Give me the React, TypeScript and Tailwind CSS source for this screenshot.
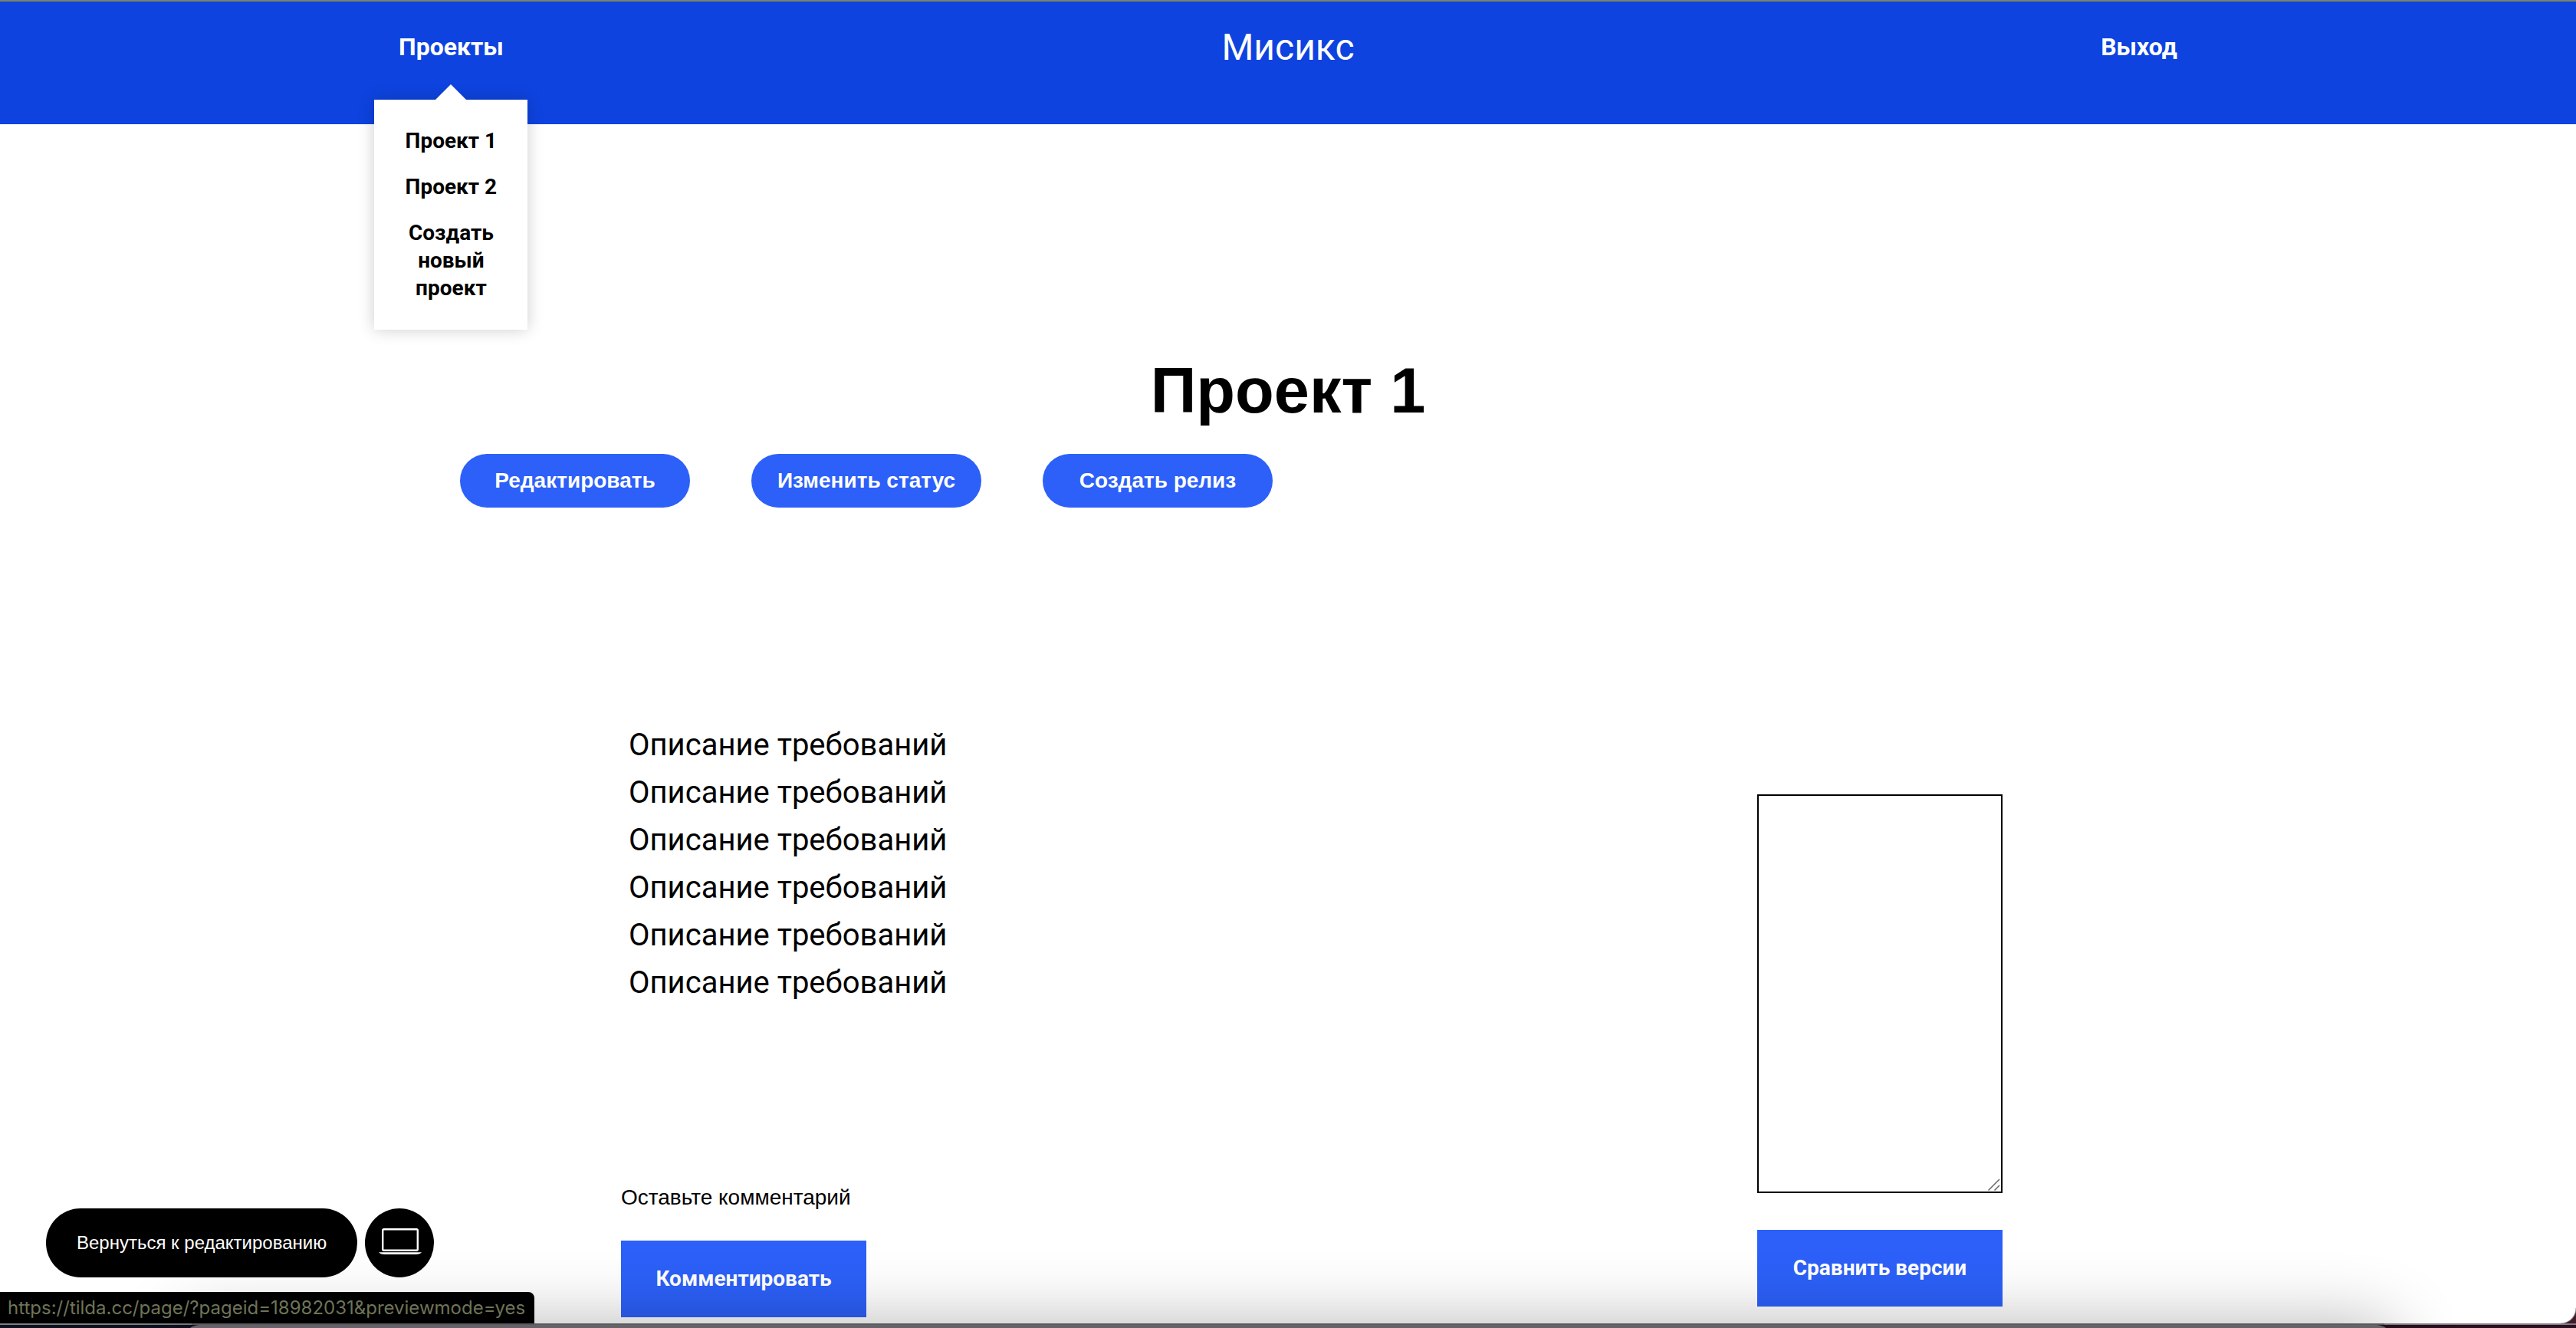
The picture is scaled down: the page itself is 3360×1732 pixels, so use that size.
import React from "react";

const projects = ["Проект 1", "Проект 2", "Создать новый проект"];
const actions = ["Редактировать", "Изменить статус", "Создать релиз"];
const requirements = Array.from({ length: 6 }, () => "Описание требований");

function Header() {
  return (
    <header className="border-t-2 border-[#7a8662] bg-[#0e43df] font-[Roboto,sans-serif] text-white">
      <nav className="mx-auto grid h-40 max-w-[2320px] grid-cols-3 items-start pt-8">
        <div className="relative justify-self-start">
          <a href="#projects" className="block text-[32px] leading-[54px] font-bold">
            Проекты
          </a>
          <ul className="absolute top-24 left-1/2 z-10 flex w-[200px] -translate-x-1/2 flex-col gap-6 bg-white p-9 text-center text-[28px] leading-9 font-bold text-black shadow-[0_0_20px_rgba(0,0,0,0.2)]">
            <li aria-hidden="true" className="absolute bottom-full left-1/2 -translate-x-1/2 border-x-20 border-b-20 border-x-transparent border-b-white" />
            {projects.map((p) => (
              <li key={p}>
                <a href="#project">{p}</a>
              </li>
            ))}
          </ul>
        </div>
        <a href="#home" className="justify-self-center text-[48px] leading-[56px]">
          Мисикс
        </a>
        <a href="#logout" className="justify-self-end text-[32px] leading-[54px] font-bold">
          Выход
        </a>
      </nav>
    </header>
  );
}

function LaptopIcon() {
  return (
    <svg viewBox="0 0 60 40" className="h-10 w-15" fill="none" aria-hidden="true">
      <rect x="8.2" y="2.2" width="45.6" height="27.6" rx="1.5" stroke="white" strokeWidth="2.4" />
      <path d="M3 32.2h56c-1 1.6-4 2.8-8 2.8H11c-4 0-7-1.2-8-2.8z" fill="white" />
    </svg>
  );
}

function VersionBox() {
  return (
    <div className="relative">
      <textarea aria-label="Версия" className="block h-[520px] w-80 resize-none border-2 border-black bg-white" />
      <svg viewBox="0 0 16 16" className="pointer-events-none absolute right-[3px] bottom-[3px] size-4" fill="none" stroke="#666666" strokeWidth="1.5" aria-hidden="true">
        <path d="M0.5 15.5L15 1M8.5 15.5L15 9" />
      </svg>
    </div>
  );
}

/* Edge of the browser window, with the shadow of the window in front of it. */
function WindowEdge() {
  return (
    <div aria-hidden="true" className="pointer-events-none fixed inset-x-0 bottom-0 h-32 overflow-hidden">
      <div className="absolute right-0 bottom-[6px] size-5 bg-[radial-gradient(circle_at_top_left,transparent_19px,#8a8a8a_20px,#431a2a_21px)]" />
      <div className="absolute inset-x-0 bottom-0 h-[6px] border-t-2 border-[#808080] bg-linear-to-r from-[#0b1220] via-[#14101c] to-[#2c0f20]" />
      <div className="absolute right-[240px] -bottom-40 left-[240px] h-[164px] rounded-t-[20px] bg-[#66626a] shadow-[0_0_90px_rgba(0,0,0,0.3)]" />
      <div className="absolute right-[250px] bottom-1 left-[250px] h-[2px] bg-[#5a5a5c]" />
    </div>
  );
}

export default function App() {
  return (
    <div className="relative flex min-h-screen flex-col overflow-hidden bg-white font-['Liberation_Sans',Arial,sans-serif] text-black">
      <Header />
      <main className="mx-auto w-full max-w-[2400px] px-[120px] pt-[298px]">
        <h1 className="text-center text-[83px] leading-[100px] font-bold">Проект 1</h1>
        <div className="mt-8 flex gap-20">
          {actions.map((a) => (
            <button key={a} type="button" className="h-[70px] w-[300px] rounded-full bg-[#2c60f8] text-[28px] font-bold text-white">
              {a}
            </button>
          ))}
        </div>
        <div className="mt-[279px] flex justify-between pr-[148px] pl-[210px]">
          <section>
            <ul className="px-[10px] font-[Roboto,sans-serif] text-[40px] leading-[62px]">
              {requirements.map((r, i) => (
                <li key={i}>{r}</li>
              ))}
            </ul>
            <p className="mt-[229px] text-[28px] leading-10">Оставьте комментарий</p>
            <button type="button" className="mt-9 h-[100px] w-80 bg-[#2c60f8] font-[Roboto,sans-serif] text-[28px] font-bold text-white">
              Комментировать
            </button>
          </section>
          <section className="flex flex-col gap-12 pt-[95px]">
            <VersionBox />
            <button type="button" className="h-[100px] w-80 bg-[#2c60f8] font-[Roboto,sans-serif] text-[28px] font-bold text-white">
              Сравнить версии
            </button>
          </section>
        </div>
      </main>

      <WindowEdge />

      <div className="fixed bottom-[66px] left-[60px] flex gap-[10px]">
        <button type="button" className="h-[90px] rounded-full bg-black px-10 text-[24px] text-white">
          Вернуться к редактированию
        </button>
        <button type="button" aria-label="Режим просмотра" className="flex size-[90px] justify-center rounded-full bg-black pt-[25px]">
          <LaptopIcon />
        </button>
      </div>

      <div className="fixed bottom-[6px] left-0 rounded-tr-lg bg-black pr-3 pl-[10px] font-[Inter,sans-serif] text-[24px] leading-[41px] text-[#6e7457]">
        https://tilda.cc/page/?pageid=18982031&amp;previewmode=yes
      </div>
    </div>
  );
}
